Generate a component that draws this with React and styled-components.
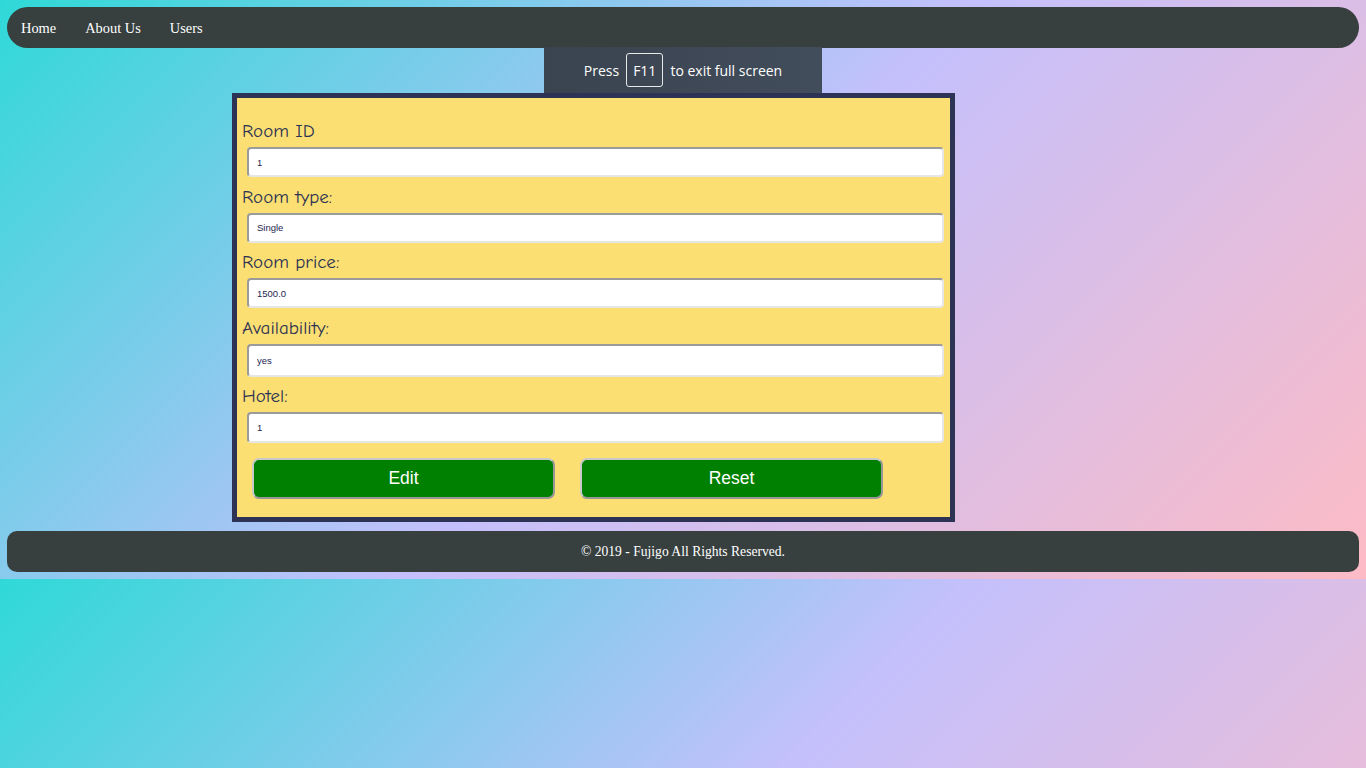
import React from "react";
import styled, { createGlobalStyle } from "styled-components";

const Global = createGlobalStyle`
  body {
    margin: 7px;
    background: linear-gradient(135deg, #2fd9d7 0%, #c4c0fc 50%, #fdbbc5 100%);
    font-family: "Liberation Serif", "Times New Roman", serif;
  }
`;

const Nav = styled.nav`
  box-sizing: border-box;
  height: 41px;
  border-radius: 21px;
  background: #373f3f;
  display: flex;
  align-items: center;
  padding: 1px 0 0 14px;
  gap: 29px;
`;

const NavLink = styled.a`
  color: #fff;
  text-decoration: none;
  font-family: "Liberation Serif", serif;
  font-size: 14.4px;
`;

const Card = styled.form`
  box-sizing: border-box;
  margin: 45px 0 0 225px;
  width: 723px;
  border: 5px solid #2d3354;
  background: #fbdf72;
  padding: 21px 6px 18px 5px;
  display: flex;
  flex-direction: column;
`;

const Label = styled.label`
  display: block;
  height: 24px;
  line-height: 24px;
  font-family: "Comic Neue", "Lato", sans-serif;
  font-size: 19px;
  color: #2c3253;
  margin-top: ${(p) => (p.$first ? "0" : "7.5px")};
`;

const Input = styled.input`
  box-sizing: border-box;
  margin: 4px 0 0 5px;
  width: 697px;
  height: ${(p) => p.$h}px;
  border: 2px solid;
  border-color: #9b9b9b #e6e6e6 #e6e6e6 #9b9b9b;
  border-radius: 4px;
  background: #fff;
  padding: 0 8px;
  font-family: "Liberation Sans", Arial, sans-serif;
  font-size: 9.5px;
  color: #1e1e50;
  outline: none;
`;

const Buttons = styled.div`
  display: flex;
  gap: 25px;
  margin: 15px 0 0 10px;
`;

const Button = styled.button`
  box-sizing: border-box;
  width: 303px;
  height: 41px;
  background: #008000;
  color: #fff;
  border: 2px solid;
  border-color: #c9c9c9 #979797 #979797 #c9c9c9;
  border-radius: 7px;
  font-family: "Liberation Sans", Arial, sans-serif;
  font-size: 17.5px;
  cursor: pointer;
`;

const Footer = styled.footer`
  box-sizing: border-box;
  margin-top: 9px;
  height: 41px;
  border-radius: 10px;
  background: #373f3f;
  display: flex;
  align-items: center;
  justify-content: center;
  padding-top: 1px;
  color: #fff;
  font-family: "Liberation Serif", serif;
  font-size: 13.6px;
`;

const Toast = styled.div`
  position: fixed;
  top: 47px;
  left: 544px;
  width: 278px;
  height: 46px;
  background: linear-gradient(90deg, #3a4350, #424d5b);
  display: flex;
  align-items: center;
  justify-content: center;
  gap: 7px;
  color: #fff;
  font-family: "Open Sans", "Noto Sans", sans-serif;
  font-size: 14px;
`;

const Key = styled.span`
  box-sizing: border-box;
  height: 34px;
  display: flex;
  align-items: center;
  padding: 0 6px;
  border: 1px solid #e8e8e8;
  border-radius: 3px;
`;

const fields = [
  { label: "Room ID", value: "1", h: 30 },
  { label: "Room type:", value: "Single", h: 30 },
  { label: "Room price:", value: "1500.0", h: 30 },
  { label: "Availability:", value: "yes", h: 33 },
  { label: "Hotel:", value: "1", h: 31 },
];

export default function App() {
  return (
    <>
      <Global />
      <Nav>
        <NavLink href="#">Home</NavLink>
        <NavLink href="#">About Us</NavLink>
        <NavLink href="#">Users</NavLink>
      </Nav>
      <Card onSubmit={(e) => e.preventDefault()}>
        {fields.map((f, i) => (
          <React.Fragment key={f.label}>
            <Label $first={i === 0}>{f.label}</Label>
            <Input $h={f.h} defaultValue={f.value} />
          </React.Fragment>
        ))}
        <Buttons>
          <Button type="submit">Edit</Button>
          <Button type="reset">Reset</Button>
        </Buttons>
      </Card>
      <Footer>© 2019 - Fujigo All Rights Reserved.</Footer>
      <Toast>
        <span>Press</span>
        <Key>F11</Key>
        <span>to exit full screen</span>
      </Toast>
    </>
  );
}
